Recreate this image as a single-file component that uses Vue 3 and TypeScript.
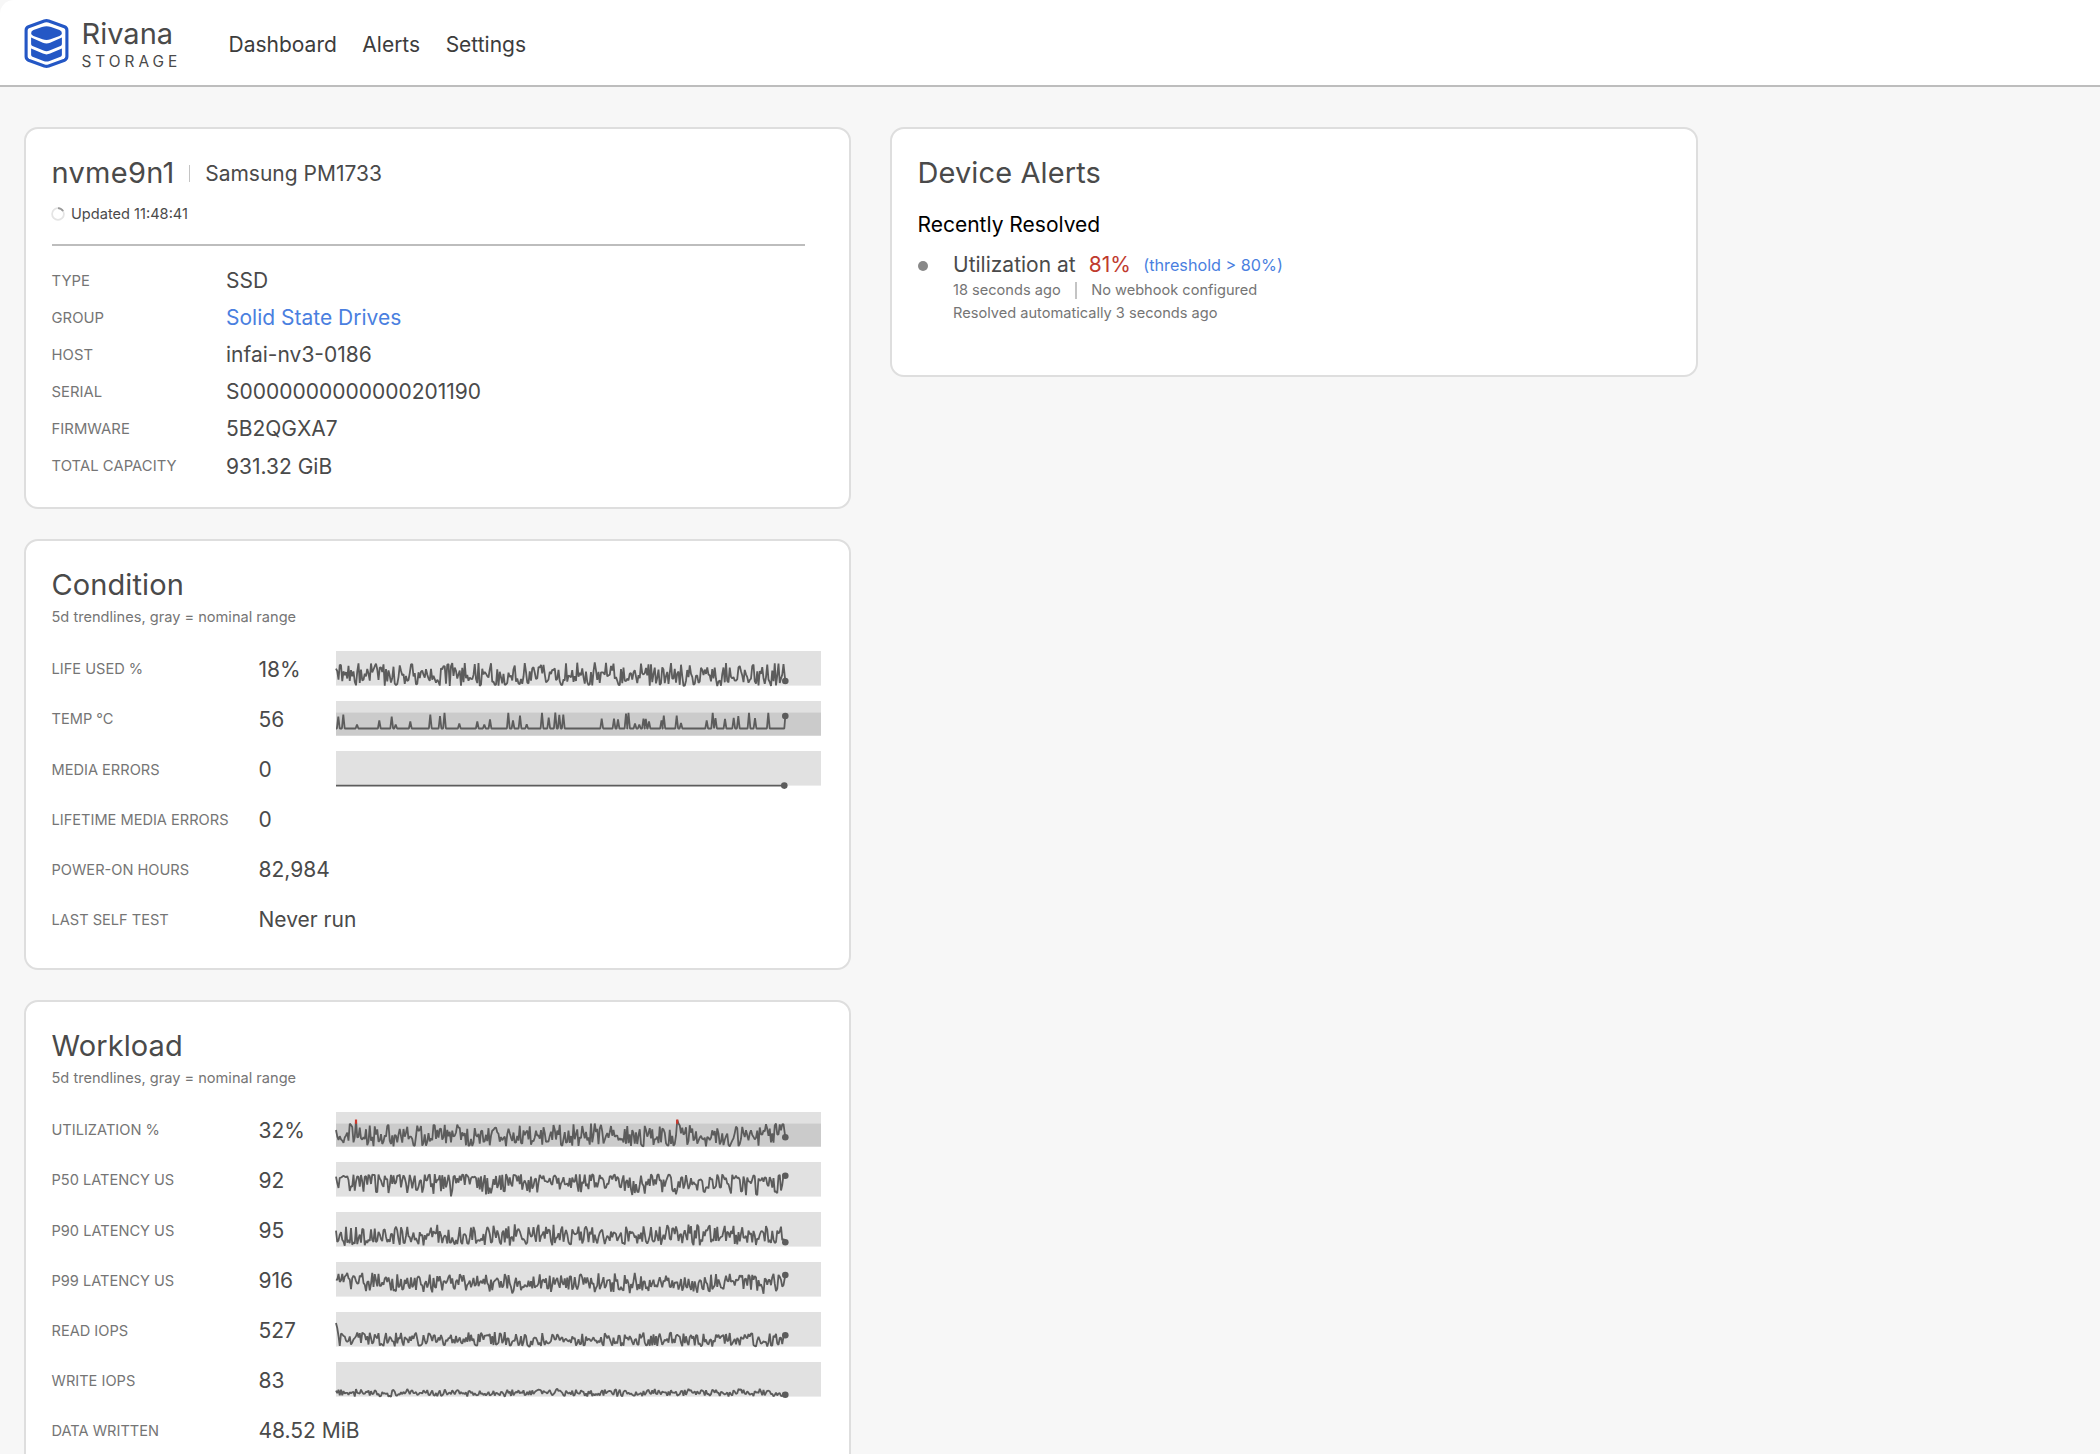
<script setup lang="ts">
interface Field { label: string; value: string; link?: boolean }
interface Dot { x: number; y: number }
interface Spark { points: string; end: Dot; band?: boolean; alarms?: string[] }
interface Metric { label: string; value: string; spark?: Spark }

const END_X = 449.3

function rng(seed: number) {
  let s = seed
  return () => {
    s = (s * 1664525 + 1013904223) % 4294967296
    return s / 4294967296
  }
}

/* Noisy trend between two heights; spread 0 is uniform, 1 gathers samples round the middle. */
function noise(
  seed: number, top: number, bottom: number, bias: number, spread: number, endY: number,
  fixed: Record<number, number> = {},
): Spark {
  const rand = rng(seed)
  const pts: string[] = []
  const step = 1.25
  for (let i = 0; i * step < END_X - 1; i++) {
    const mixed = rand() * (1 - spread / 2) + rand() * (spread / 2)
    const y = fixed[i] ?? top + Math.pow(mixed, bias) * (bottom - top)
    pts.push(`${(i * step).toFixed(2)},${y.toFixed(1)}`)
  }
  pts.push(`${END_X},${endY}`)
  return { points: pts.join(' '), end: { x: END_X, y: endY } }
}

const tempSpikes: [number, number][] = [
  [2.3, 16], [7.3, 14], [21, 24], [43.3, 20], [55.7, 16], [59.7, 24], [74.3, 21], [94.3, 14],
  [104, 15.5], [108.5, 12.3], [123.3, 23], [141.3, 21], [148.3, 24], [154, 19], [172.3, 12.3], [177, 20],
  [184, 15], [190.7, 23.7], [206, 12.3], [212.7, 17], [219.3, 12], [223.3, 14.3], [227.3, 14],
  [265.7, 18], [278, 18], [282, 19], [290, 13], [292.5, 12.3], [299, 23], [303.3, 24], [307.5, 18],
  [309.8, 18.5], [313, 21], [325.5, 20], [327.8, 15], [340.7, 15], [345, 22.5], [370.7, 20], [376.7, 12.3],
  [379.5, 17.5], [389, 18.3], [397.7, 17.3], [402.3, 15.7], [413, 12.3], [419, 17.7], [432.3, 12.3],
]

function tempSpark(): Spark {
  const base = 27.5
  const pts = [`0,${base}`]
  for (const [x, y] of tempSpikes) {
    pts.push(`${(x - 1.4).toFixed(1)},${base}`, `${x},${y - 0.5}`, `${(x + 1.4).toFixed(1)},${base}`)
  }
  pts.push(`448.3,${base}`, `${END_X},15`)
  return { points: pts.join(' '), end: { x: END_X, y: 15 }, band: true }
}

const util: Spark = {
  ...noise(77, 11.5, 34.5, 0.95, 0, 25.3, { 16: 8, 273: 8, 358: 12 }),
  band: true,
  alarms: ['M20 7.5V11.8', 'M341.2 7.5V11.8'],
}

const fields: Field[] = [
  { label: 'TYPE', value: 'SSD' },
  { label: 'GROUP', value: 'Solid State Drives', link: true },
  { label: 'HOST', value: 'infai-nv3-0186' },
  { label: 'SERIAL', value: 'S0000000000000201190' },
  { label: 'FIRMWARE', value: '5B2QGXA7' },
  { label: 'TOTAL CAPACITY', value: '931.32 GiB' },
]

const panels: { title: string; metrics: Metric[] }[] = [
  {
    title: 'Condition',
    metrics: [
      { label: 'LIFE USED %', value: '18%', spark: noise(11, 11.5, 35, 0.95, 0, 30, { 358: 13 }) },
      { label: 'TEMP °C', value: '56', spark: tempSpark() },
      { label: 'MEDIA ERRORS', value: '0', spark: { points: '0,34.6 448.5,34.6', end: { x: 448.3, y: 34.6 } } },
      { label: 'LIFETIME MEDIA ERRORS', value: '0' },
      { label: 'POWER-ON HOURS', value: '82,984' },
      { label: 'LAST SELF TEST', value: 'Never run' },
    ],
  },
  {
    title: 'Workload',
    metrics: [
      { label: 'UTILIZATION %', value: '32%', spark: util },
      { label: 'P50 LATENCY US', value: '92', spark: noise(23, 12, 35, 1.6, 0.3, 13.8) },
      { label: 'P90 LATENCY US', value: '95', spark: noise(35, 11.5, 34, 0.85, 0.1, 30.3) },
      { label: 'P99 LATENCY US', value: '916', spark: noise(49, 10.5, 32, 1.15, 0.5, 13) },
      { label: 'READ IOPS', value: '527', spark: noise(58, 19.5, 35, 0.9, 0.2, 23.3, { 0: 11, 1: 16, 2: 24, 3: 34 }) },
      { label: 'WRITE IOPS', value: '83', spark: noise(64, 26.5, 35, 0.9, 0.4, 32.7) },
      { label: 'DATA WRITTEN', value: '48.52 MiB' },
    ],
  },
]
</script>

<template>
  <div class="app">
    <header class="topbar">
      <div class="brand">
        <svg class="logo" viewBox="0 0 44 49" width="45" height="49">
          <path
            d="M19.8 2 Q22 1.2 24.2 2 L40 7.8 Q42.4 8.8 42.4 11.4 V37.6 Q42.4 40.2 40 41.2 L24.2 47 Q22 47.8 19.8 47 L4 41.2 Q1.6 40.2 1.6 37.6 V11.4 Q1.6 8.8 4 7.8 Z"
            fill="#fff" stroke="#2457c5" stroke-width="3.1" />
          <path d="M6.6 14.2 Q6.6 12 9 11 L17.5 7.9 Q22 6.5 26.5 7.9 L35 11 Q37.4 12 37.4 14.2 Q37.4 16 35 17 L26 20.3 Q22 21.8 18 20.3 L9 17 Q6.6 16 6.6 14.2Z" fill="#2457c5" />
          <path d="M6.6 18.4 L18.4 23.8 Q22 25.4 25.6 23.8 L37.4 18.4 V25 Q37.4 26.4 36 27 L25 31.6 Q22 32.8 19 31.6 L8 27 Q6.6 26.4 6.6 25Z" fill="#2457c5" />
          <path d="M6.6 29.6 L18.4 34.6 Q22 36.2 25.6 34.6 L37.4 29.6 V35.8 Q37.4 37.2 36 37.8 L25 41.9 Q22 43 19 41.9 L8 37.8 Q6.6 37.2 6.6 35.8Z" fill="#2457c5" />
        </svg>
        <div class="wordmark">
          <span class="name">Rivana</span>
          <span class="sub">STORAGE</span>
        </div>
      </div>
      <nav class="nav">
        <a>Dashboard</a>
        <a>Alerts</a>
        <a>Settings</a>
      </nav>
    </header>

    <main class="columns">
      <div class="left">
        <section class="card device">
          <div class="heading">
            <h1>nvme9n1</h1>
            <i class="bar"></i>
            <span class="model">Samsung PM1733</span>
          </div>
          <div class="updated">
            <svg width="14" height="14" viewBox="0 0 14 14" fill="none" stroke-width="1.8">
              <circle cx="7" cy="7" r="5.9" stroke="#e4e4e4" />
              <path d="M7 1.1 A5.9 5.9 0 0 1 12.1 4.1" stroke="#999" />
            </svg>
            <span>Updated 11:48:41</span>
          </div>
          <hr />
          <dl class="fields">
            <div v-for="f in fields" :key="f.label" class="field">
              <dt>{{ f.label }}</dt>
              <dd :class="{ link: f.link }">{{ f.value }}</dd>
            </div>
          </dl>
        </section>

        <section v-for="p in panels" :key="p.title" class="card panel">
          <h2>{{ p.title }}</h2>
          <p class="hint">5d trendlines, gray = nominal range</p>
          <div class="metrics">
            <div v-for="m in p.metrics" :key="m.label" class="metric">
              <span class="label">{{ m.label }}</span>
              <span class="value">{{ m.value }}</span>
              <svg v-if="m.spark" class="spark" width="485" height="35" viewBox="0 0 485 35">
                <rect width="485" height="34.6" fill="#e1e1e1" />
                <rect v-if="m.spark.band" y="11.6" width="485" height="23" fill="#cbcbcb" />
                <polyline :points="m.spark.points" fill="none" stroke="#5c5c5c" stroke-width="1.8" stroke-linejoin="bevel" />
                <path v-for="a in m.spark.alarms" :key="a" :d="a" stroke="#d0382c" stroke-width="2.2" />
                <circle :cx="m.spark.end.x" :cy="m.spark.end.y" r="3.3" fill="#5c5c5c" />
              </svg>
            </div>
          </div>
        </section>
      </div>

      <section class="card alerts">
        <h2>Device Alerts</h2>
        <h3>Recently Resolved</h3>
        <div class="alert">
          <i class="dot"></i>
          <div class="body">
            <div class="line">
              <span>Utilization at</span>
              <span class="hot">81%</span>
              <a class="threshold">(threshold &gt; 80%)</a>
            </div>
            <div class="meta">
              <span>18 seconds ago</span>
              <i class="bar"></i>
              <span>No webhook configured</span>
            </div>
            <div class="resolved">Resolved automatically 3 seconds ago</div>
          </div>
        </div>
      </section>
    </main>
  </div>
</template>

<style>
body {
  background: #f7f7f7;
  overflow: hidden;
}
</style>

<style scoped>
.app {
  height: 1454px;
  overflow: hidden;
  font-family: Inter, "Liberation Sans", sans-serif;
  font-size: 21px;
  color: #4a4a4a;
  background: #f7f7f7;
}
h1, h2, h3, p, dl, dd, dt {
  margin: 0;
  font-weight: 400;
}
.topbar {
  box-sizing: border-box;
  height: 87px;
  padding-left: 24px;
  display: flex;
  align-items: center;
  background: #fff;
  border-bottom: 2px solid #bdbdbd;
  border-top-left-radius: 14px;
}
.brand {
  display: flex;
  width: 204.5px;
  gap: 12.5px;
  padding-top: 2px;
}
.logo {
  flex: none;
  margin-top: 3px;
}
.wordmark {
  display: flex;
  flex-direction: column;
  padding-top: 1px;
}
.name {
  font-size: 29px;
  line-height: 34px;
}
.sub {
  font-size: 15.4px;
  line-height: 21px;
  letter-spacing: 4px;
}
.nav {
  display: flex;
  gap: 25.5px;
  padding-top: 5px;
  line-height: 26px;
  color: #3c3c3c;
}
.columns {
  display: flex;
  align-items: flex-start;
  gap: 39px;
  padding: 40px 24px 0;
}
.left {
  width: 827px;
  flex: none;
  display: flex;
  flex-direction: column;
  gap: 30px;
}
.card {
  box-sizing: border-box;
  background: #fff;
  border: 2px solid #dedede;
  border-radius: 14px;
  padding: 26px 25.5px 0;
}
h1, h2 {
  font-size: 29px;
  line-height: 36px;
  letter-spacing: 0.1px;
}
h1 {
  letter-spacing: 0.3px;
}
.device {
  height: 382px;
}
.heading {
  display: flex;
  align-items: center;
}
.bar {
  width: 1.5px;
  height: 17px;
  background: #c4c4c4;
}
.heading .bar {
  margin: 0 15px 0 14px;
}
.updated {
  display: flex;
  align-items: center;
  gap: 6.5px;
  margin-top: 13px;
  font-size: 14.6px;
  line-height: 20px;
}
.updated svg {
  margin-left: -1px;
}
hr {
  width: 753px;
  height: 2px;
  margin: 20px 0 16px;
  border: 0;
  background: #bdbdbd;
}
.field {
  display: flex;
  align-items: center;
  height: 37.1px;
}
dt, .label {
  flex: none;
  color: #757575;
}
dt {
  width: 174.5px;
  font-size: 14.8px;
  letter-spacing: 0.05px;
}
.link {
  color: #4a7fe0;
}
.panel {
  height: 431px;
}
.panel + .panel {
  height: 520px;
}
.hint {
  margin-top: 4px;
  font-size: 14.6px;
  line-height: 20px;
  color: #757575;
}
.metrics {
  margin-top: 17.4px;
}
.metric {
  display: flex;
  align-items: center;
  height: 50.05px;
}
.label {
  width: 207px;
  font-size: 14.6px;
}
.value {
  width: 77.5px;
  flex: none;
  white-space: nowrap;
}
.spark {
  flex: none;
  overflow: visible;
  margin-top: -2.6px;
}
.alerts {
  width: 808px;
  height: 250px;
}
h3 {
  margin-top: 21px;
  font-size: 21px;
  line-height: 26px;
  color: #000;
}
.alert {
  display: flex;
  margin-top: 13px;
}
.dot {
  width: 10px;
  height: 10px;
  margin: 10px 25.5px 0 0;
  border-radius: 50%;
  background: #888;
}
.line {
  display: flex;
  align-items: center;
  line-height: 28px;
}
.hot {
  margin: 0 12.5px 0 13px;
  color: #c03a2e;
}
.threshold {
  font-size: 16.2px;
  color: #4a7fe0;
}
.meta {
  display: flex;
  align-items: center;
  gap: 14.5px;
  font-size: 14.6px;
  line-height: 23px;
  color: #757575;
}
.resolved {
  font-size: 14.6px;
  line-height: 23px;
  color: #757575;
}
</style>
